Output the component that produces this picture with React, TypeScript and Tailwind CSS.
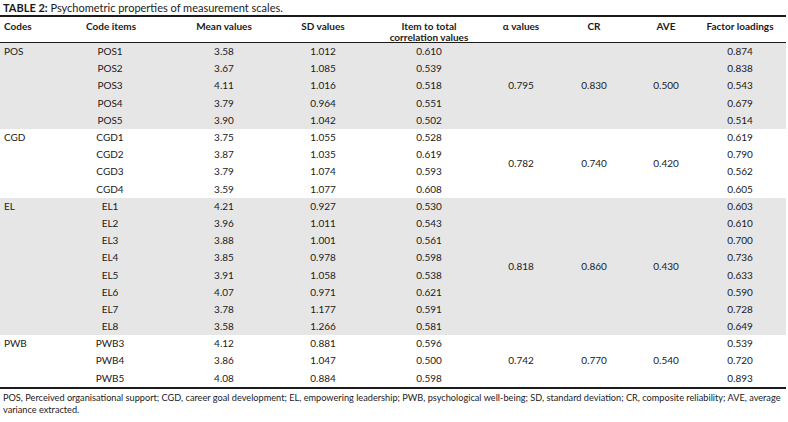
import React from "react";

type Row = [string, string, string, string, string];

interface Group {
  code: string;
  shaded: boolean;
  alpha: string;
  cr: string;
  ave: string;
  rows: Row[];
}

const groups: Group[] = [
  {
    code: "POS",
    shaded: true,
    alpha: "0.795",
    cr: "0.830",
    ave: "0.500",
    rows: [
      ["POS1", "3.58", "1.012", "0.610", "0.874"],
      ["POS2", "3.67", "1.085", "0.539", "0.838"],
      ["POS3", "4.11", "1.016", "0.518", "0.543"],
      ["POS4", "3.79", "0.964", "0.551", "0.679"],
      ["POS5", "3.90", "1.042", "0.502", "0.514"],
    ],
  },
  {
    code: "CGD",
    shaded: false,
    alpha: "0.782",
    cr: "0.740",
    ave: "0.420",
    rows: [
      ["CGD1", "3.75", "1.055", "0.528", "0.619"],
      ["CGD2", "3.87", "1.035", "0.619", "0.790"],
      ["CGD3", "3.79", "1.074", "0.593", "0.562"],
      ["CGD4", "3.59", "1.077", "0.608", "0.605"],
    ],
  },
  {
    code: "EL",
    shaded: true,
    alpha: "0.818",
    cr: "0.860",
    ave: "0.430",
    rows: [
      ["EL1", "4.21", "0.927", "0.530", "0.603"],
      ["EL2", "3.96", "1.011", "0.543", "0.610"],
      ["EL3", "3.88", "1.001", "0.561", "0.700"],
      ["EL4", "3.85", "0.978", "0.598", "0.736"],
      ["EL5", "3.91", "1.058", "0.538", "0.633"],
      ["EL6", "4.07", "0.971", "0.621", "0.590"],
      ["EL7", "3.78", "1.177", "0.591", "0.728"],
      ["EL8", "3.58", "1.266", "0.581", "0.649"],
    ],
  },
  {
    code: "PWB",
    shaded: false,
    alpha: "0.742",
    cr: "0.770",
    ave: "0.540",
    rows: [
      ["PWB3", "4.12", "0.881", "0.596", "0.539"],
      ["PWB4", "3.86", "1.047", "0.500", "0.720"],
      ["PWB5", "4.08", "0.884", "0.598", "0.893"],
    ],
  },
];

const spanClass: Record<number, string> = {
  3: "row-span-3",
  4: "row-span-4",
  5: "row-span-5",
  8: "row-span-8",
};

const cols = "grid grid-cols-[53px_114px_114px_84px_128px_56px_90px_54px_94px]";

function Cell({ children }: { children: React.ReactNode }) {
  return <div className="flex items-center justify-center">{children}</div>;
}

function GroupBlock({ g }: { g: Group }) {
  const span = spanClass[g.rows.length];
  return (
    <div className={`${cols} auto-rows-[17.2px] ${g.shaded ? "bg-[#e6e6e6]" : "bg-white"}`}>
      <div className={`${span} pl-[4px]`}>
        <div className="h-[17.2px] flex items-center">{g.code}</div>
      </div>
      {g.rows.map((r, i) => (
        <React.Fragment key={r[0]}>
          <Cell>{r[0]}</Cell>
          <Cell>{r[1]}</Cell>
          <Cell>{r[2]}</Cell>
          <Cell>{r[3]}</Cell>
          {i === 0 && (
            <>
              <div className={`${span} flex items-center justify-center`}>{g.alpha}</div>
              <div className={`${span} flex items-center justify-center`}>{g.cr}</div>
              <div className={`${span} flex items-center justify-center`}>{g.ave}</div>
            </>
          )}
          <Cell>{r[4]}</Cell>
        </React.Fragment>
      ))}
    </div>
  );
}

export default function App() {
  return (
    <div className="w-[788px] h-[422px] bg-white text-[#1c1a1b] font-['Lato',sans-serif] overflow-hidden">
      <div className="text-[11px] leading-[15px] pl-[3px]">
        <span className="font-bold">TABLE 2:</span> Psychometric properties of measurement scales.
      </div>
      <div className="w-[786px] border-t-2 border-[#1c1a1b]">
        <div className={`${cols} h-[26px] border-b-[1.5px] border-[#1c1a1b] text-[10px] leading-[11px] font-bold pt-[4px]`}>
          <div className="pl-[4px]">Codes</div>
          <div className="pl-[33px]">Code items</div>
          <div className="text-center">Mean values</div>
          <div className="text-center">SD values</div>
          <div className="text-center">
            Item to total
            <br />
            correlation values
          </div>
          <div className="text-center">α values</div>
          <div className="text-center">CR</div>
          <div className="text-center">AVE</div>
          <div className="text-center">Factor loadings</div>
        </div>
        <div className="text-[10px]">
          {groups.map((g) => (
            <GroupBlock key={g.code} g={g} />
          ))}
        </div>
        <div className="border-t-2 border-[#1c1a1b]" />
      </div>
      <p className="text-[9.2px] leading-[12px] pl-[3px] pt-[3px] pr-[2px]">
        POS, Perceived organisational support; CGD, career goal development; EL, empowering leadership; PWB,
        psychological well-being; SD, standard deviation; CR, composite reliability; AVE, average variance extracted.
      </p>
    </div>
  );
}
